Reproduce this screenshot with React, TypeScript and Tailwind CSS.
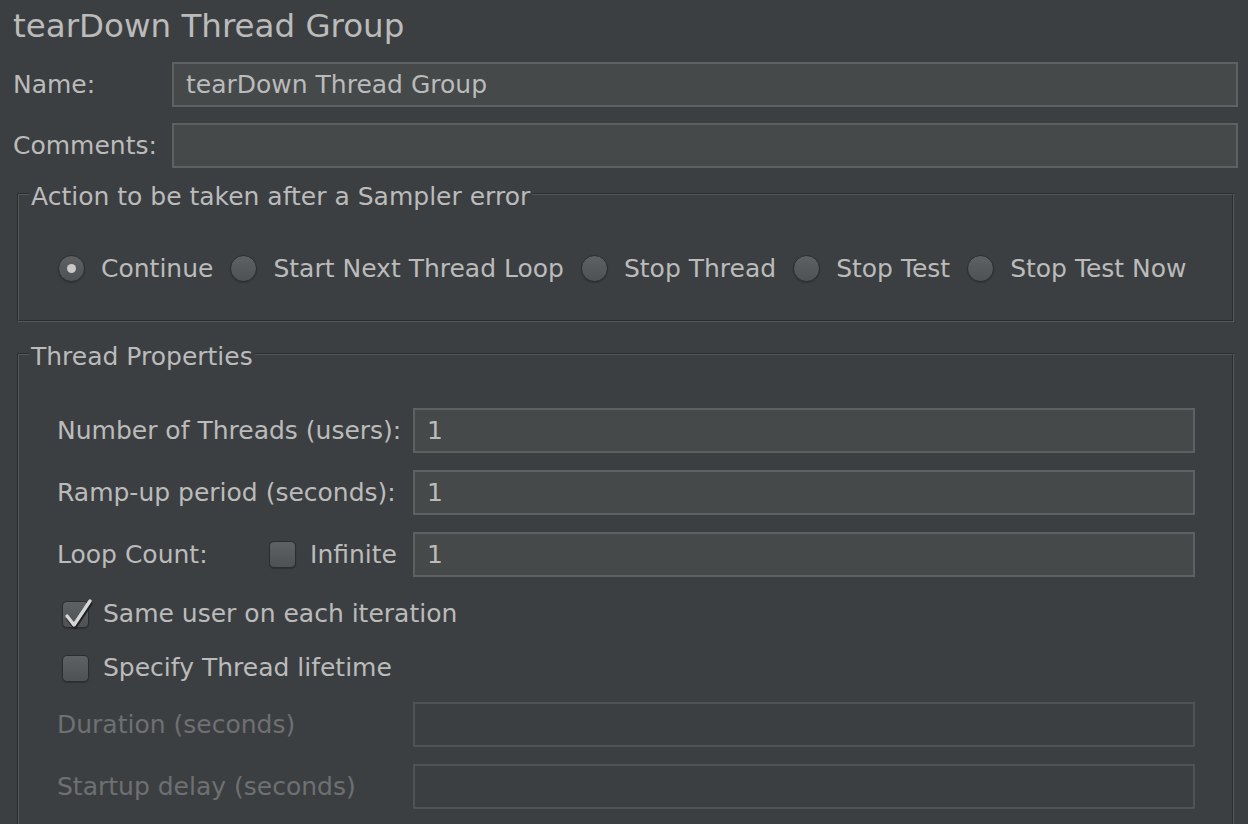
import React from "react";

function Radio({ checked }: { checked?: boolean }) {
  return (
    <span className="relative flex h-[27px] w-[27px] shrink-0 items-center justify-center rounded-full border border-[#2b2d2f] bg-gradient-to-b from-[#5e6163] to-[#4f5254] shadow-[0_1px_1px_#2e3032]">
      {checked && <span className="h-[9px] w-[9px] rounded-full bg-[#c9c9c9]" />}
    </span>
  );
}

function Checkbox({ checked }: { checked?: boolean }) {
  return (
    <span className="relative block h-[27px] w-[27px] shrink-0 rounded-[5px] border border-[#2b2d2f] bg-gradient-to-b from-[#5e6163] to-[#4f5254] shadow-[0_1px_1px_#2e3032]">
      {checked && (
        <svg
          className="absolute left-[-2px] top-[-3px] overflow-visible"
          width="32"
          height="30"
          viewBox="0 0 32 30"
        >
          <polyline points="6,18 13,27 29,3" fill="none" stroke="#1f2122" strokeWidth="3.6" strokeLinecap="round" strokeLinejoin="round" transform="translate(0.8,1.4)" />
          <polyline points="6,17 13,26 29,2" fill="none" stroke="#d6d6d6" strokeWidth="3.4" strokeLinecap="round" strokeLinejoin="round" />
        </svg>
      )}
    </span>
  );
}

function Etched({ title, className, children }: { title: string; className?: string; children: React.ReactNode }) {
  return (
    <div className={`relative border-t border-l border-t-[#2a2c2e] border-l-[#2a2c2e] border-r border-b border-r-[#55585a] border-b-[#55585a] ${className ?? ""}`}>
      <div className="h-full border-t border-l border-t-[#55585a] border-l-[#55585a] border-r border-b border-r-[#2a2c2e] border-b-[#2a2c2e]">
        {children}
      </div>
      <span className="absolute left-[11px] top-[-11px] bg-[#3c3f41] px-[2px] text-[25px] leading-[28px] text-[#bbbbbb]">
        {title}
      </span>
    </div>
  );
}

function Input({ value, disabled }: { value?: string; disabled?: boolean }) {
  return (
    <div
      className={`flex h-[45px] flex-1 items-center border-2 px-[12px] text-[25px] ${
        disabled ? "border-[#505355] bg-[#3c3f41]" : "border-[#5e6062] bg-[#45494a]"
      }`}
    >
      {value}
    </div>
  );
}

export default function App() {
  const radios = ["Continue", "Start Next Thread Loop", "Stop Thread", "Stop Test", "Stop Test Now"];
  return (
    <div className="h-[824px] w-[1248px] overflow-hidden bg-[#3c3f41] font-['DejaVu_Sans',sans-serif] text-[#bbbbbb]">
      <div className="pl-[13px] pr-[10px]">
        <div className="h-[52px] text-[32.5px] leading-[52px]">tearDown Thread Group</div>
        <div className="mt-[10px] flex h-[45px] items-center">
          <div className="w-[159px] text-[25px]">Name:</div>
          <Input value="tearDown Thread Group" />
        </div>
        <div className="mt-[16px] flex h-[45px] items-center">
          <div className="w-[159px] text-[25px]">Comments:</div>
          <Input />
        </div>
      </div>

      <div className="ml-[17px] mr-[14px] mt-[25px]">
        <Etched title="Action to be taken after a Sampler error" className="h-[129px]">
          <div className="flex items-center gap-[17px] pl-[39px] pt-[55px] text-[25px]">
            {radios.map((r, i) => (
              <div key={r} className="flex items-center gap-[16px]">
                <Radio checked={i === 0} />
                <span>{r}</span>
              </div>
            ))}
          </div>
        </Etched>
      </div>

      <div className="ml-[17px] mr-[14px] mt-[31px]">
        <Etched title="Thread Properties" className="h-[520px]">
          <div className="flex flex-col pl-[38px] pr-[37px] pt-[53px] text-[25px]">
            <div className="flex h-[45px] items-center">
              <div className="w-[356px]">Number of Threads (users):</div>
              <Input value="1" />
            </div>
            <div className="mt-[17px] flex h-[45px] items-center">
              <div className="w-[356px]">Ramp-up period (seconds):</div>
              <Input value="1" />
            </div>
            <div className="mt-[17px] flex h-[45px] items-center">
              <div className="flex w-[356px] items-center justify-between pr-[16px]">
                <span>Loop Count:</span>
                <span className="flex items-center gap-[14px]">
                  <Checkbox />
                  <span>Infinite</span>
                </span>
              </div>
              <Input value="1" />
            </div>
            <div className="mt-[23px] flex h-[28px] items-center gap-[14px] pl-[5px]">
              <Checkbox checked />
              <span>Same user on each iteration</span>
            </div>
            <div className="mt-[26px] flex h-[28px] items-center gap-[14px] pl-[5px]">
              <Checkbox />
              <span>Specify Thread lifetime</span>
            </div>
            <div className="mt-[20px] flex h-[45px] items-center">
              <div className="w-[356px] text-[#6e7072]">Duration (seconds)</div>
              <Input disabled />
            </div>
            <div className="mt-[17px] flex h-[45px] items-center">
              <div className="w-[356px] text-[#6e7072]">Startup delay (seconds)</div>
              <Input disabled />
            </div>
          </div>
        </Etched>
      </div>
    </div>
  );
}
